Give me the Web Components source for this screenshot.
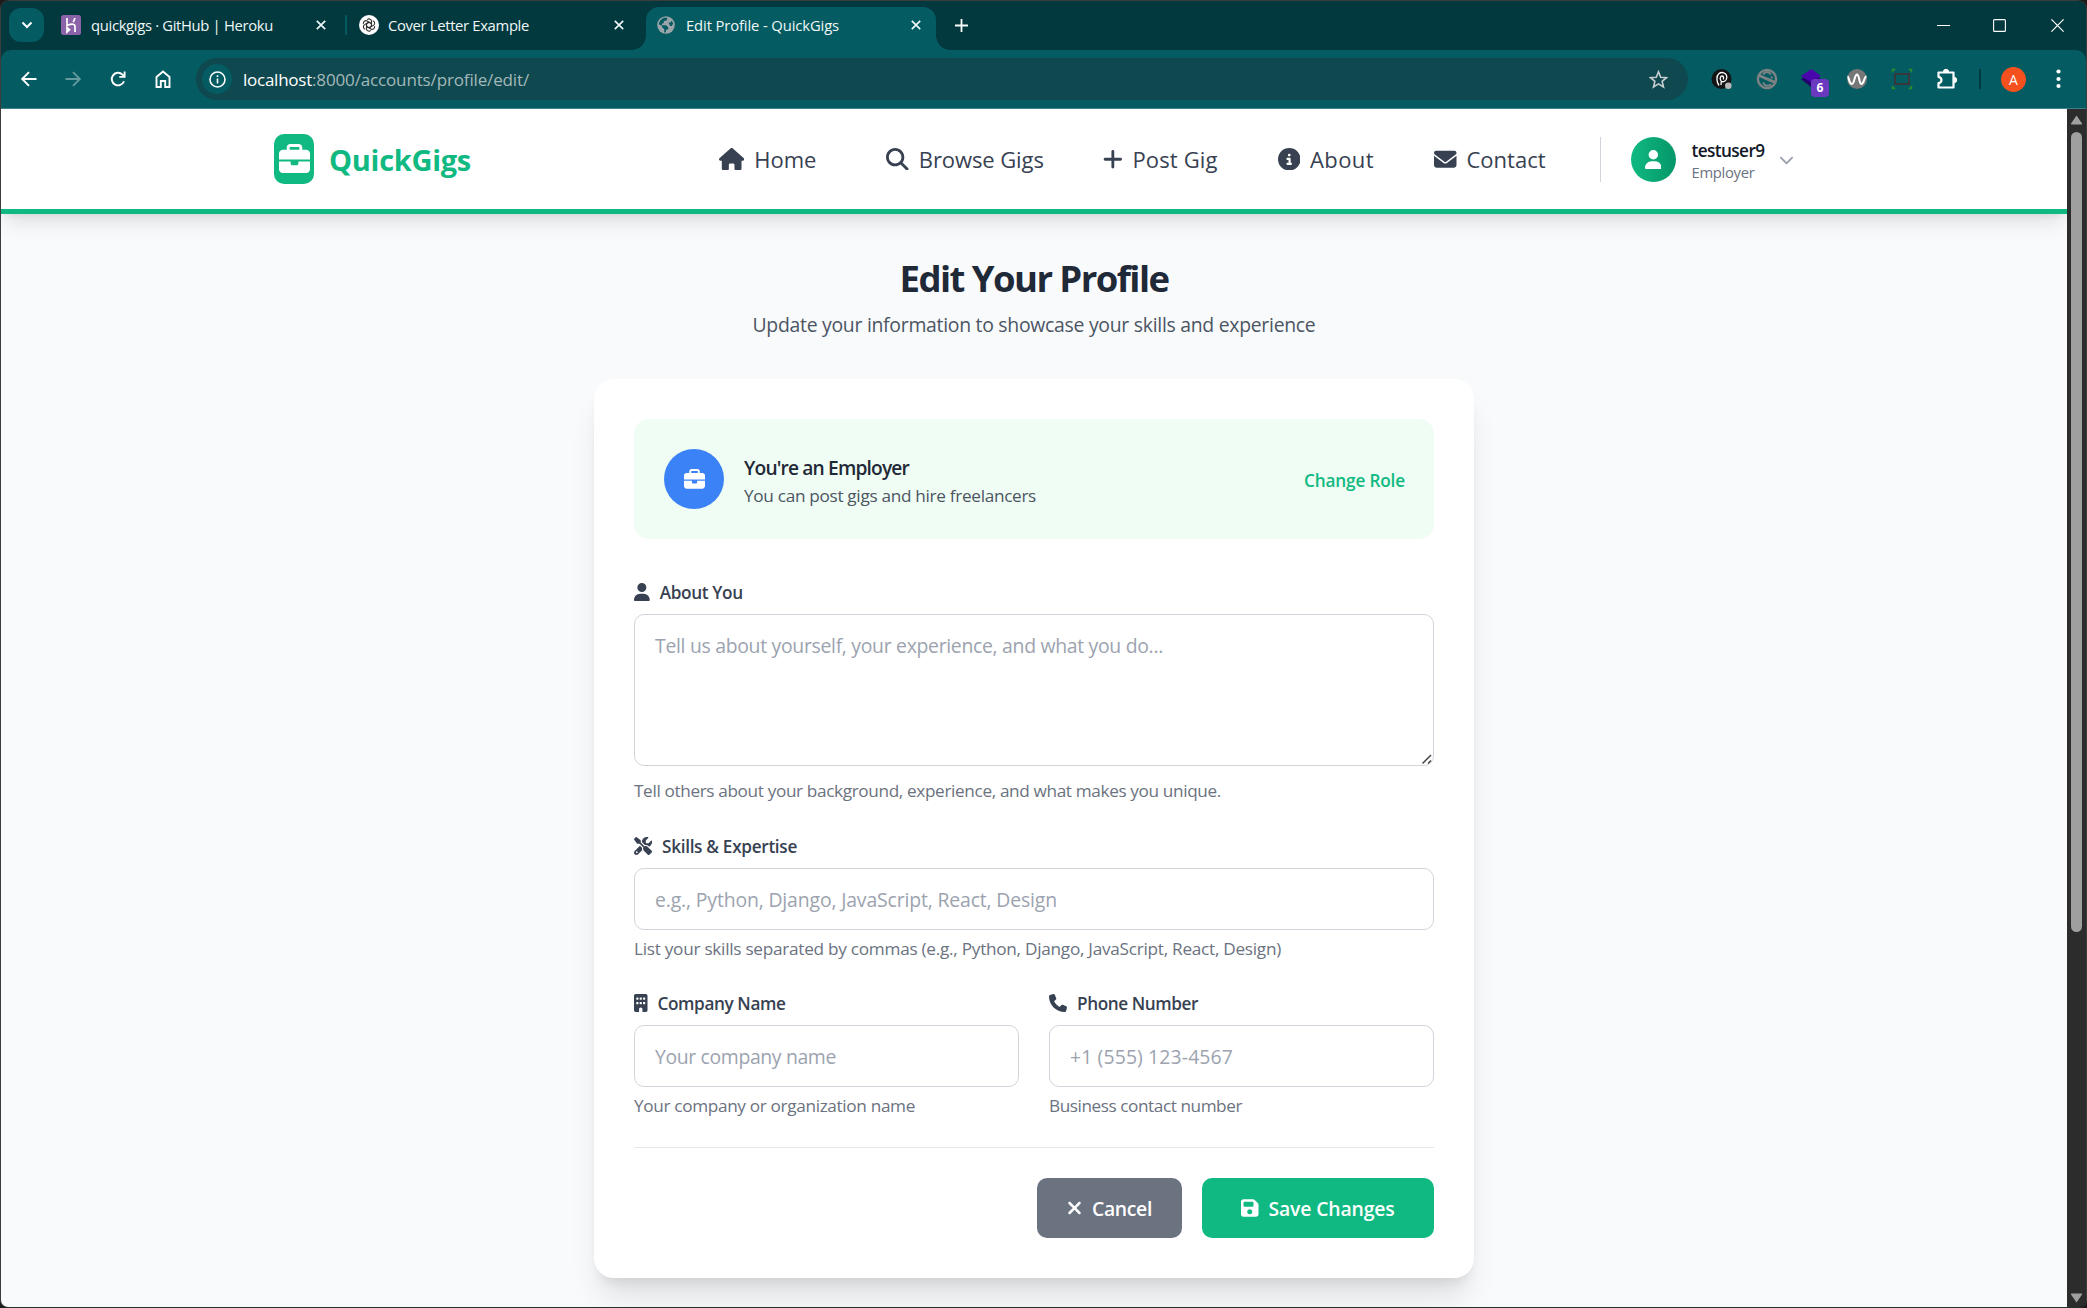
<!DOCTYPE html>
<html lang="en">
<head>
<meta charset="utf-8">
<title>Edit Profile - QuickGigs</title>
<style>
html,body{margin:0;height:100%;background:#1c1c1c;overflow:hidden}
body{font-family:"Open Sans","Noto Sans",sans-serif;-webkit-font-smoothing:auto}
</style>
</head>
<body>
<browser-window></browser-window>
<script>
const FA = {
house:[576,512,"M575.8 255.5c0 18-15 32.1-32 32.1h-32l.7 160.2c0 2.7-.2 5.4-.5 8.1V472c0 22.1-17.9 40-40 40H456c-1.1 0-2.2 0-3.3-.1c-1.4 .1-2.8 .1-4.2 .1H416 392c-22.1 0-40-17.9-40-40V448 384c0-17.7-14.3-32-32-32H256c-17.7 0-32 14.3-32 32v64 24c0 22.1-17.9 40-40 40H160 128.1c-1.5 0-3-.1-4.5-.2c-1.2 .1-2.4 .2-3.6 .2H104c-22.1 0-40-17.9-40-40V360c0-.9 0-1.9 .1-2.8V287.6H32c-18 0-32-14-32-32.1c0-9 3-17 10-24L266.4 8c7-7 15-8 22-8s15 2 21 7L564.8 231.5c8 7 12 15 11 24z"],
search:[512,512,"M416 208c0 45.9-14.9 88.3-40 122.7L502.6 457.4c12.5 12.5 12.5 32.8 0 45.3s-32.8 12.5-45.3 0L330.7 376c-34.4 25.2-76.8 40-122.7 40C93.1 416 0 322.9 0 208S93.1 0 208 0S416 93.1 416 208zM208 352a144 144 0 1 0 0-288 144 144 0 1 0 0 288z"],
plus:[448,512,"M256 80c0-17.7-14.3-32-32-32s-32 14.3-32 32V224H48c-17.7 0-32 14.3-32 32s14.3 32 32 32H192V432c0 17.7 14.3 32 32 32s32-14.3 32-32V288H400c17.7 0 32-14.3 32-32s-14.3-32-32-32H256V80z"],
info:[512,512,"M256 512A256 256 0 1 0 256 0a256 256 0 1 0 0 512zM216 336h24V272H216c-13.3 0-24-10.7-24-24s10.7-24 24-24h48c13.3 0 24 10.7 24 24v88h8c13.3 0 24 10.7 24 24s-10.7 24-24 24H216c-13.3 0-24-10.7-24-24s10.7-24 24-24zm40-208a32 32 0 1 1 0 64 32 32 0 1 1 0-64z"],
envelope:[512,512,"M48 64C21.5 64 0 85.5 0 112c0 15.1 7.1 29.3 19.2 38.4L236.8 313.6c11.4 8.5 27 8.5 38.4 0L492.8 150.4c12.1-9.1 19.2-23.3 19.2-38.4c0-26.5-21.5-48-48-48H48zM0 176V384c0 35.3 28.7 64 64 64H448c35.3 0 64-28.7 64-64V176L294.4 339.2c-22.8 17.1-54 17.1-76.8 0L0 176z"],
user:[448,512,"M224 256A128 128 0 1 0 224 0a128 128 0 1 0 0 256zm-45.7 48C79.8 304 0 383.8 0 482.3C0 498.7 13.3 512 29.7 512H418.3c16.4 0 29.7-13.3 29.7-29.7C448 383.8 368.2 304 269.7 304H178.3z"],
chevron:[512,512,"M233.4 406.6c12.5 12.5 32.8 12.5 45.3 0l192-192c12.5-12.5 12.5-32.8 0-45.3s-32.8-12.5-45.3 0L256 338.7 86.6 169.4c-12.5-12.5-32.8-12.5-45.3 0s-12.5 32.8 0 45.3l192 192z"],
briefcase:[512,512,"M184 48H328c4.4 0 8 3.6 8 8V96H176V56c0-4.4 3.6-8 8-8zm-56 8V96H64C28.7 96 0 124.7 0 160v96H192 320 512V160c0-35.3-28.7-64-64-64H384V56c0-30.9-25.1-56-56-56H184c-30.9 0-56 25.1-56 56zM512 288H320v32c0 17.7-14.3 32-32 32H224c-17.7 0-32-14.3-32-32V288H0V416c0 35.3 28.7 64 64 64H448c35.3 0 64-28.7 64-64V288z"],
phone:[512,512,"M164.9 24.6c-7.7-18.6-28-28.5-47.4-23.2l-88 24C12.1 30.2 0 46 0 64C0 311.4 200.6 512 448 512c18 0 33.8-12.1 38.6-29.5l24-88c5.3-19.4-4.6-39.7-23.2-47.4l-96-40c-16.3-6.8-35.2-2.1-46.3 11.6L304.7 368C234.3 334.7 177.3 277.7 144 207.3L193.3 167c13.7-11.2 18.4-30 11.6-46.3l-40-96z"],
save:[448,512,"M64 32C28.7 32 0 60.7 0 96V416c0 35.3 28.7 64 64 64H384c35.3 0 64-28.7 64-64V173.3c0-17-6.7-33.3-18.7-45.3L352 50.7C340 38.7 323.7 32 306.7 32H64zm0 96c0-17.7 14.3-32 32-32H288c17.7 0 32 14.3 32 32v64c0 17.7-14.3 32-32 32H96c-17.7 0-32-14.3-32-32V128zM224 288a64 64 0 1 1 0 128 64 64 0 1 1 0-128z"],
xmark:[384,512,"M342.6 150.6c12.5-12.5 12.5-32.8 0-45.3s-32.8-12.5-45.3 0L192 210.7 86.6 105.4c-12.5-12.5-32.8-12.5-45.3 0s-12.5 32.8 0 45.3L146.7 256 41.4 361.4c-12.5 12.5-12.5 32.8 0 45.3s32.8 12.5 45.3 0L192 301.3 297.4 406.6c12.5 12.5 32.8 12.5 45.3 0s12.5-32.8 0-45.3L237.3 256 342.6 150.6z"],
building:[384,512,"M48 0C21.5 0 0 21.5 0 48V464c0 26.5 21.5 48 48 48h96V432c0-26.5 21.5-48 48-48s48 21.5 48 48v80h96c26.5 0 48-21.5 48-48V48c0-26.5-21.5-48-48-48H48zM64 240c0-8.8 7.2-16 16-16h32c8.8 0 16 7.2 16 16v32c0 8.8-7.2 16-16 16H80c-8.8 0-16-7.2-16-16V240zm112-16h32c8.8 0 16 7.2 16 16v32c0 8.8-7.2 16-16 16H176c-8.8 0-16-7.2-16-16V240c0-8.8 7.2-16 16-16zm80 16c0-8.8 7.2-16 16-16h32c8.8 0 16 7.2 16 16v32c0 8.8-7.2 16-16 16H272c-8.8 0-16-7.2-16-16V240zM80 96h32c8.8 0 16 7.2 16 16v32c0 8.8-7.2 16-16 16H80c-8.8 0-16-7.2-16-16V112c0-8.8 7.2-16 16-16zm80 16c0-8.8 7.2-16 16-16h32c8.8 0 16 7.2 16 16v32c0 8.8-7.2 16-16 16H176c-8.8 0-16-7.2-16-16V112zM272 96h32c8.8 0 16 7.2 16 16v32c0 8.8-7.2 16-16 16H272c-8.8 0-16-7.2-16-16V112c0-8.8 7.2-16 16-16z"],
tools:[512,512,"M78.6 5C69.1-2.4 55.6-1.5 47 7L7 47c-8.5 8.5-9.4 22-2.1 31.6l80 104c4.5 5.9 11.6 9.4 19 9.4h54.1l109 109c-14.7 29-10 65.4 14.3 89.6l112 112c12.5 12.5 32.8 12.5 45.3 0l64-64c12.5-12.5 12.5-32.8 0-45.3l-112-112c-24.2-24.2-60.6-29-89.6-14.3l-109-109V104c0-7.5-3.5-14.5-9.4-19L78.6 5zM19.9 396.1C7.2 408.8 0 426.1 0 444.1C0 481.6 30.4 512 67.9 512c18 0 35.3-7.2 48-19.9L233.7 374.3c-7.8-20.9-9-43.6-3.6-65.1l-61.7-61.7L19.9 396.1zM512 144c0-10.5-1.1-20.7-3.2-30.5c-2.4-11.2-16.1-14.1-24.2-6l-63.9 63.9c-3 3-7.1 4.7-11.3 4.7H352c-8.8 0-16-7.2-16-16V102.6c0-4.2 1.7-8.3 4.7-11.3l63.9-63.9c8.1-8.1 5.2-21.8-6-24.2C388.5 1.1 378.3 0 368 0C288.5 0 224 64.5 224 144l0 .8 85.3 85.3c36-9.1 75.8 .5 104 28.7L429 274.5c49-23 83-72.8 83-130.5zM56 432a24 24 0 1 1 48 0 24 24 0 1 1 -48 0z"]
};
function define(name, html, setup) {
  const t = document.createElement('template');
  customElements.define(name, class extends HTMLElement {
    connectedCallback() {
      if (this.shadowRoot) return;
      t.innerHTML = typeof html === 'function' ? html(this) : html;
      this.attachShadow({mode:'open'}).appendChild(t.content.cloneNode(true));
      if (setup) setup(this);
    }
  });
}
/* Solid glyph icon; size is the em height */
define('fa-icon', el => {
  const [w,h,d] = FA[el.getAttribute('name')], s = +el.getAttribute('size');
  return `<style>:host{display:block;flex:none}svg{display:block;fill:currentColor}</style><svg width="${w/h*s}" height="${s}" viewBox="0 0 ${w} ${h}"><path fill-rule="evenodd" d="${d}"/></svg>`;
});
/* One line of text tracked so that it fills the width given in "w" */
define('fit-text', `<style>:host{display:block;flex:none;white-space:nowrap}span{display:inline-block}</style><span><slot></slot></span>`, el => {
  const s = el.shadowRoot.querySelector('span'), w = +el.getAttribute('w');
  const n = el.textContent.length, nat = s.getBoundingClientRect().width;
  s.style.letterSpacing = ((w - nat) / n) + 'px';
  el.style.width = w + 'px';
});

define('tab-close', `<style>:host{display:block;flex:none;width:10px;height:10px}svg{display:block}</style><svg width="10" height="10" viewBox="0 0 10 10"><path d="M.8.8l8.400 8.400M9.200.8L.8 9.200" stroke="#eef6f6" stroke-width="1.700"/></svg>`);

define('tab-strip', `<style>
:host{display:flex;height:49px;background:#02393e;color:#f0f7f7;font-size:14.800px;line-height:20px}
.search{width:35px;height:34px;border-radius:12px;background:#045b61;margin:7px 0 0 8px;display:grid;place-items:center;flex:none}
.tab{display:flex;align-items:center;height:48px;flex:none;box-sizing:border-box}
.a{width:301px;padding:0 19px 0 17px}.b{width:301px;padding:0 22px 0 14px}
.sep{width:2px;height:20px;background:#045b61;margin-top:14px;border-radius:1px;flex:none;margin-right:-2px}
fit-text{margin:0 auto 1px 0}
svg{display:block;flex:none}
.active{background:#045b61;width:290px;height:43px;margin-top:6px;border-radius:13px 13px 0 0;padding:0 15px 7px 11px}
.curve{width:14px;height:14px;align-self:flex-end;flex:none}
.l{background:radial-gradient(circle at 0 0,#02393e 13.5px,#045b61 14px);margin-left:-14px}
.r{background:radial-gradient(circle at 100% 0,#02393e 13.5px,#045b61 14px)}
.ctl{display:flex;gap:43px;margin:18px 22px 0 auto}
</style>
<div class="search"><svg width="12" height="8" viewBox="0 0 12 8"><path d="M1.5 1.5L6 6l4.500-4.500" fill="none" stroke="#fff" stroke-width="2"/></svg></div>
<div class="tab a">
<svg width="20" height="20" viewBox="0 0 20 20"><rect width="20" height="20" rx="2.500" fill="#8b63a8"/><path d="M6 3v7.500q8-3 8 1V17M6 12.500v4.500l2.500-2.200zM13.800 3q-.3 2.500-1.800 4" fill="none" stroke="#fff" stroke-width="1.700"/></svg>
<fit-text w="182" style="margin-left:10px">quickgigs · GitHub | Heroku</fit-text><tab-close></tab-close></div>
<div class="sep"></div>
<div class="tab b"><svg width="20" height="20" viewBox="0 0 20 20"><circle cx="10" cy="10" r="10" fill="#fff"/><g fill="none" stroke="#333" stroke-width="1.100"><path d="M10 7.200L7.500 8.700v5.400a2.600 2.600 0 0 0 4.300 1.300"/><path d="M10 7.200L7.500 8.700v5.400a2.600 2.600 0 0 0 4.300 1.300" transform="rotate(60 10 10)"/><path d="M10 7.200L7.500 8.700v5.400a2.600 2.600 0 0 0 4.300 1.300" transform="rotate(120 10 10)"/><path d="M10 7.200L7.500 8.700v5.400a2.600 2.600 0 0 0 4.300 1.300" transform="rotate(180 10 10)"/><path d="M10 7.200L7.500 8.700v5.400a2.600 2.600 0 0 0 4.300 1.300" transform="rotate(240 10 10)"/><path d="M10 7.200L7.500 8.700v5.400a2.600 2.600 0 0 0 4.300 1.300" transform="rotate(300 10 10)"/></g></svg>
<fit-text w="141" style="margin-left:9px">Cover Letter Example</fit-text><tab-close></tab-close></div>
<div class="curve l"></div>
<div class="tab active"><svg width="18" height="18" viewBox="0 0 18 18"><circle cx="9" cy="9" r="8.800" fill="#9ba4a8"/><path d="M10.500 1.800l-.8 2.600-2.900.5v2l-1.900.8v1.500h4.300l2 2.200v1.900l-2.300.6v2.400l-1.700.2v-3.400l-2-1.700V10L1.700 8.300q1-5 5.300-6.600zM11.500 6.400h2.300l.9-1.900 1.500 3-1.500 2.600h-1.600z" fill="#045b61"/></svg>
<fit-text w="153" style="margin-left:11px">Edit Profile - QuickGigs</fit-text><tab-close></tab-close></div>
<div class="curve r"></div>
<svg width="13" height="13" viewBox="0 0 13 13" style="margin:18px 0 0 5px"><path d="M6.500 0v13M0 6.500h13" stroke="#fff" stroke-width="1.800"/></svg>
<div class="ctl">
<svg width="13" height="13" viewBox="0 0 13 13"><path d="M0 6.500h13" stroke="#fff"/></svg>
<svg width="13" height="13" viewBox="0 0 13 13"><rect x=".6" y=".6" width="11.800" height="11.800" rx="1" fill="none" stroke="#fff" stroke-width="1.100"/></svg>
<svg width="13" height="13" viewBox="0 0 13 13" style="margin-left:2px"><path d="M.4.4l12.200 12.200M12.600.4L.4 12.600" stroke="#fff" stroke-width="1.200"/></svg>
</div>`);

define('tool-bar', `<style>
:host{display:block;background:#02393e}
.bar{height:58px;background:#045b61;border-radius:10px 10px 0 0;display:flex;align-items:center;box-sizing:border-box}
.line{height:1px;background:#3d8086}
svg{display:block;flex:none}
.nav{display:flex;align-items:center;width:195px;padding-left:18.500px;box-sizing:border-box;gap:26.700px;flex:none}
.omni{width:1492px;height:42px;border-radius:21px;background:#0f484f;display:flex;align-items:center;box-sizing:border-box;padding:0 20px 0 6px;flex:none}
.inf{width:30px;height:30px;border-radius:50%;background:#045b61;display:grid;place-items:center}
.url{display:flex;font-size:17px;line-height:24px;color:#a3b8ba;margin:1px auto 0 11px}
.url .h{color:#fff}
.ext{display:flex;align-items:center;margin-left:23px;gap:23px}
.lay{position:relative;width:22px;height:22px}
.badge{position:absolute;left:10px;top:11px;width:18px;height:18px;border-radius:4px;background:#6b38c0;color:#fff;font:700 12px/18px "Open Sans",sans-serif;text-align:center}
.sep{width:2px;height:20px;background:#02393e;margin-left:21px}
.av{width:25px;height:25px;border-radius:50%;background:#f4511e;color:#fff;font-size:14px;line-height:25px;text-align:center;margin-left:20px}
</style>
<div class="bar">
<div class="nav">
<svg width="18" height="18" viewBox="0 0 18 18"><path d="M16.500 9H3M9 2.200L2.200 9 9 15.800" fill="none" stroke="#fff" stroke-width="1.900"/></svg>
<svg width="18" height="18" viewBox="0 0 18 18"><path d="M1.500 9H15M9 2.200L15.800 9 9 15.800" fill="none" stroke="#639b9f" stroke-width="1.900"/></svg>
<svg width="18" height="18" viewBox="0 0 18 18"><path d="M15 11.200A6.300 6.300 0 1 1 13.500 4.600L15.500 6.500M15.600 1.600v5.300h-5.300" fill="none" stroke="#fff" stroke-width="1.900"/></svg>
<svg width="18" height="18" viewBox="0 0 18 18"><path d="M2.500 7v10h4.300v-6h4.400v6h4.300V7L9 1.600z" fill="none" stroke="#fff" stroke-width="1.900"/></svg>
</div>
<div class="omni"><div class="inf"><svg width="17" height="17" viewBox="0 0 17 17"><circle cx="8.500" cy="8.500" r="7.500" fill="none" stroke="#fff" stroke-width="1.600"/><path d="M8.500 7.500v5M8.500 4.300v1.700" stroke="#fff" stroke-width="1.600"/></svg></div>
<div class="url"><fit-text class="h" w="69">localhost</fit-text><fit-text w="217">:8000/accounts/profile/edit/</fit-text></div>
<svg width="19" height="19" viewBox="0 0 19 19"><path d="M9.500 1.800l2.200 5.400 5.800.4-4.400 3.700 1.400 5.700-5-3.100-5 3.100 1.400-5.700L1.500 7.600l5.800-.4z" fill="none" stroke="#c5cdd0" stroke-width="1.600"/></svg></div>
<div class="ext">
<svg width="22" height="22" viewBox="0 0 22 22"><circle cx="10.500" cy="11" r="10" fill="#141414"/><path d="M8 17.500C5.500 14 5 8 8 5.500c3-2.200 8-.5 7.800 4-.2 4-4.300 5.500-6 3-1.300-2-.3-4.500 1.200-4.500s2 1.500 1.200 3.500M10.200 13.500l-.2 3.500" fill="none" stroke="#fff" stroke-width="1.300"/><circle cx="17.300" cy="17.800" r="3.300" fill="#b9b9b9"/></svg>
<svg width="22" height="22" viewBox="0 0 22 22"><circle cx="11" cy="11" r="9.100" fill="none" stroke="#7d8284" stroke-width="2.400"/><path d="M2.500 7.200L19.500 14.600" stroke="#7d8284" stroke-width="2.800"/><path d="M7.500 6.700q.5-2.700 3.500-2.700t3.500 2.700M7 14.300q1.300 3.200 4.300 3.400 2.200 0 3.600-1.600M15.700 8.500v2" fill="none" stroke="#7d8284" stroke-width="1.900"/></svg>
<div class="lay"><svg width="22" height="22" viewBox="0 0 22 22"><path d="M0 11l10-6 10 6-10 8z" fill="#22006b"/><path d="M0 8l10.500-7L20 8l-9.500 6.500z" fill="#4b05ad"/></svg><div class="badge">6</div></div>
<svg width="22" height="22" viewBox="0 0 22 22"><circle cx="11" cy="11" r="10" fill="#777"/><path d="M1.500 8.500c1.500 0 1.500 7.500 4.300 7.500S8.500 6.500 11 6.500 13 16 15.500 16s2.500-7.500 5-7.500" fill="none" stroke="#fff" stroke-width="2.100"/></svg>
<svg width="22" height="22" viewBox="0 0 22 22"><rect x="4" y="6" width="14" height="10" fill="none" stroke="#35393c" stroke-width="2"/><path d="M.8 5V.8H5zM17 .8h4.200V5zM.8 17v4.200H5zM21.200 17v4.200H17z" fill="#2e8b2e"/></svg>
<svg width="22" height="22" viewBox="0 0 22 22"><path d="M2.500 4.500h15v15h-15v-4.300q3-.6 3-3.200t-3-3.200z" fill="none" stroke="#fff" stroke-width="2.200" stroke-linejoin="round"/><path d="M7.300 4a2.700 2.700 0 0 1 5.400 0zM18 9.300a2.700 2.700 0 0 1 0 5.400z" fill="#fff" stroke="#fff" stroke-width="1"/></svg>
</div>
<div class="sep"></div><div class="av">A</div>
<svg width="5" height="20" viewBox="0 0 5 20" style="margin-left:30px" fill="#fff"><circle cx="2.500" cy="2.500" r="2.100"/><circle cx="2.500" cy="10" r="2.100"/><circle cx="2.500" cy="17" r="2.100"/></svg>
</div><div class="line"></div>`);

define('nav-link', el => `<style>:host{display:flex;align-items:center;color:#374151;font-size:22px;font-weight:530;line-height:30px}fit-text{margin-left:10px;margin-bottom:1px}</style><fa-icon name="${el.getAttribute('icon')}" size="22.500"></fa-icon><fit-text w="${el.getAttribute('w')}">${el.textContent}</fit-text>`);

define('user-menu', `<style>
:host{display:flex;align-items:center;border-left:1px solid #d1d5db;height:45px;padding-left:30px;box-sizing:border-box}
.av{width:45px;height:45px;border-radius:50%;background:linear-gradient(to right,#10b981,#059669);display:grid;place-items:center;color:#fff}
.n{margin:2px 0 0 16px}
.u{font-size:17.200px;font-weight:600;line-height:24px;color:#111827}
.r{font-size:14.800px;line-height:19px;color:#6b7280}
</style><div class="av"><fa-icon name="user" size="19"></fa-icon></div><div class="n"><fit-text class="u" w="73">testuser9</fit-text><fit-text class="r" w="63">Employer</fit-text></div><fa-icon name="chevron" size="15" style="color:#9ca3af;margin-left:14px"></fa-icon>`);

define('site-nav', `<style>
:host{display:block;height:100px;background:#fff;border-bottom:5px solid #10b981;box-shadow:0 12.500px 19px -4px rgba(0,0,0,.1),0 5px 7.500px -5px rgba(0,0,0,.1);position:relative}
.in{width:1520px;margin:0 auto;height:100px;display:flex;align-items:center}
.logo{width:40px;height:50px;border-radius:10px;background:#10b981;color:#fff;display:grid;place-items:center}
.brand{font-size:29px;font-weight:700;line-height:40px;color:#10b981;margin:1px 0 0 15px}
</style>
<div class="in"><div class="logo"><fa-icon name="briefcase" size="31"></fa-icon></div><fit-text class="brand" w="142">QuickGigs</fit-text>
<nav-link icon="house" w="62" style="margin-left:248px">Home</nav-link>
<nav-link icon="search" w="125" style="margin-left:70px">Browse Gigs</nav-link>
<nav-link icon="plus" w="85" style="margin-left:59px">Post Gig</nav-link>
<nav-link icon="info" w="64" style="margin-left:60px">About</nav-link>
<nav-link icon="envelope" w="79" style="margin-left:60px">Contact</nav-link>
<user-menu style="margin-left:54px"></user-menu></div>`);

define('role-banner', `<style>
:host{display:flex;height:120px;align-items:center;background:#f0fdf4;border-radius:15px;padding:0 29px 0 30px}
.c{width:60px;height:60px;border-radius:50%;background:#3b82f6;color:#fff;display:grid;place-items:center}
.t{margin:4px auto 0 20px}
.h{font-size:19.200px;font-weight:600;line-height:28px;color:#1f2937;margin-bottom:1px}
.s{font-size:17.200px;line-height:26px;color:#4b5563}
.l{font-size:17.200px;font-weight:600;line-height:26px;color:#10b981;margin-top:3px}
</style><div class="c"><fa-icon name="briefcase" size="21"></fa-icon></div><div class="t"><fit-text class="h" w="165">You're an Employer</fit-text><fit-text class="s" w="292">You can post gigs and hire freelancers</fit-text></div><fit-text class="l" w="101">Change Role</fit-text>`);

/* Label, bordered control with hint text, and a help line */
define('form-field', el => { const a = n => el.getAttribute(n), area = el.hasAttribute('area'); return `<style>
:host{display:block}
.l{display:flex;align-items:center;height:26px;gap:10px;font-size:17.200px;font-weight:600;line-height:26px;color:#374151}
.l fit-text{margin-top:1px}
.c{box-sizing:border-box;height:${area?152:62}px;border:1px solid #d1d5db;border-radius:10px;background:#fff;margin-top:9px;padding:16px 0 0 20px;font-size:19.400px;line-height:30px;color:#9ca3af;display:flex}
.h{margin-top:${area?12:6}px;font-size:17.200px;line-height:26px;color:#6b7280}
svg{margin:auto 1px 1px auto}
</style><div class="l"><fa-icon name="${a('icon')}" size="18"></fa-icon><fit-text w="${a('lw')}">${a('label')}</fit-text></div>
<div class="c"><fit-text w="${a('pw')}">${a('hint')}</fit-text>${area?'<svg width="10" height="10" viewBox="0 0 10 10"><path d="M.5 9.500l8.500-8.500M6 9.500l3-3" stroke="#444" stroke-width="1.500"/></svg>':''}</div>
<fit-text class="h" w="${a('hw')}">${a('help')}</fit-text>`; });

define('action-button', el => `<style>:host{display:flex;height:60px;box-sizing:border-box;align-items:center;border-radius:10px;color:#fff;font-size:19.400px;font-weight:600;line-height:30px;gap:10px;padding-left:${el.getAttribute('pad')}px}fit-text{margin-top:2px}</style><fa-icon name="${el.getAttribute('icon')}" size="20"></fa-icon><fit-text w="${el.getAttribute('w')}">${el.textContent}</fit-text>`);

define('profile-page', `<style>
:host{display:block;flex:1;overflow:hidden;background:#f9fafc}
.title{font-size:36.500px;font-weight:700;line-height:50px;color:#1f2937;margin:39px auto 0}
.sub{font-size:19.400px;line-height:30px;color:#4b5563;margin:7px auto 0}
.card{width:800px;padding:40px;background:#fff;border-radius:20px;margin:39px auto 0;box-shadow:0 25px 31px -6px rgba(0,0,0,.1),0 10px 12.500px -7.500px rgba(0,0,0,.1)}
.row{display:grid;grid-template-columns:1fr 1fr;gap:30px;margin-top:28px}
.act{display:flex;justify-content:flex-end;gap:20px;border-top:1px solid #e5e7eb;margin-top:28px;padding-top:30px}
</style>
<site-nav></site-nav>
<fit-text class="title" w="269">Edit Your Profile</fit-text>
<fit-text class="sub" w="563">Update your information to showcase your skills and experience</fit-text>
<div class="card"><role-banner></role-banner>
<form-field area style="margin-top:40px" icon="user" label="About You" lw="83" hint="Tell us about yourself, your experience, and what you do..." pw="508" help="Tell others about your background, experience, and what makes you unique." hw="587"></form-field>
<form-field style="margin-top:29px" icon="tools" label="Skills &amp;amp; Expertise" lw="135" hint="e.g., Python, Django, JavaScript, React, Design" pw="402" help="List your skills separated by commas (e.g., Python, Django, JavaScript, React, Design)" hw="647"></form-field>
<div class="row">
<form-field icon="building" label="Company Name" lw="128" hint="Your company name" pw="181" help="Your company or organization name" hw="281"></form-field>
<form-field icon="phone" label="Phone Number" lw="121" hint="+1 (555) 123-4567" pw="163" help="Business contact number" hw="193"></form-field>
</div>
<div class="act"><action-button icon="xmark" w="60" pad="30" style="width:145px;background:#6b7280">Cancel</action-button><action-button icon="save" w="126" pad="39" style="width:232px;background:#10b981">Save Changes</action-button></div>
</div>`);

define('scroll-bar', `<style>
:host{display:flex;flex-direction:column;align-items:center;width:19px;background:#2c2c2c;flex:none;border-radius:0 0 8px 0}
svg{display:block;fill:#9f9f9f}.t{width:11px;height:800px;border-radius:6px;background:#9f9f9f;margin:7px 0 auto}
</style><svg width="13" height="10" viewBox="0 0 13 10" style="margin-top:6px"><path d="M6.500.5L12 8.500q.3 1-.5 1h-10q-.8 0-.5-1z"/></svg><div class="t"></div><svg width="13" height="10" viewBox="0 0 13 10" style="margin-bottom:4px"><path d="M6.500 9.500L1 1.500q-.3-1 .5-1h10q.8 0 .5 1z"/></svg>`);

define('browser-window', `<style>
:host{display:flex;flex-direction:column;height:1308px;width:2087px;box-sizing:border-box;border:1px solid #3d3d3d;border-bottom-color:#2a2d2d;border-radius:9px 9px 8px 8px;overflow:hidden}
.v{display:flex;height:1198px}
</style><tab-strip></tab-strip><tool-bar></tool-bar><div class="v"><profile-page></profile-page><scroll-bar></scroll-bar></div>`);
</script>
</body>
</html>
